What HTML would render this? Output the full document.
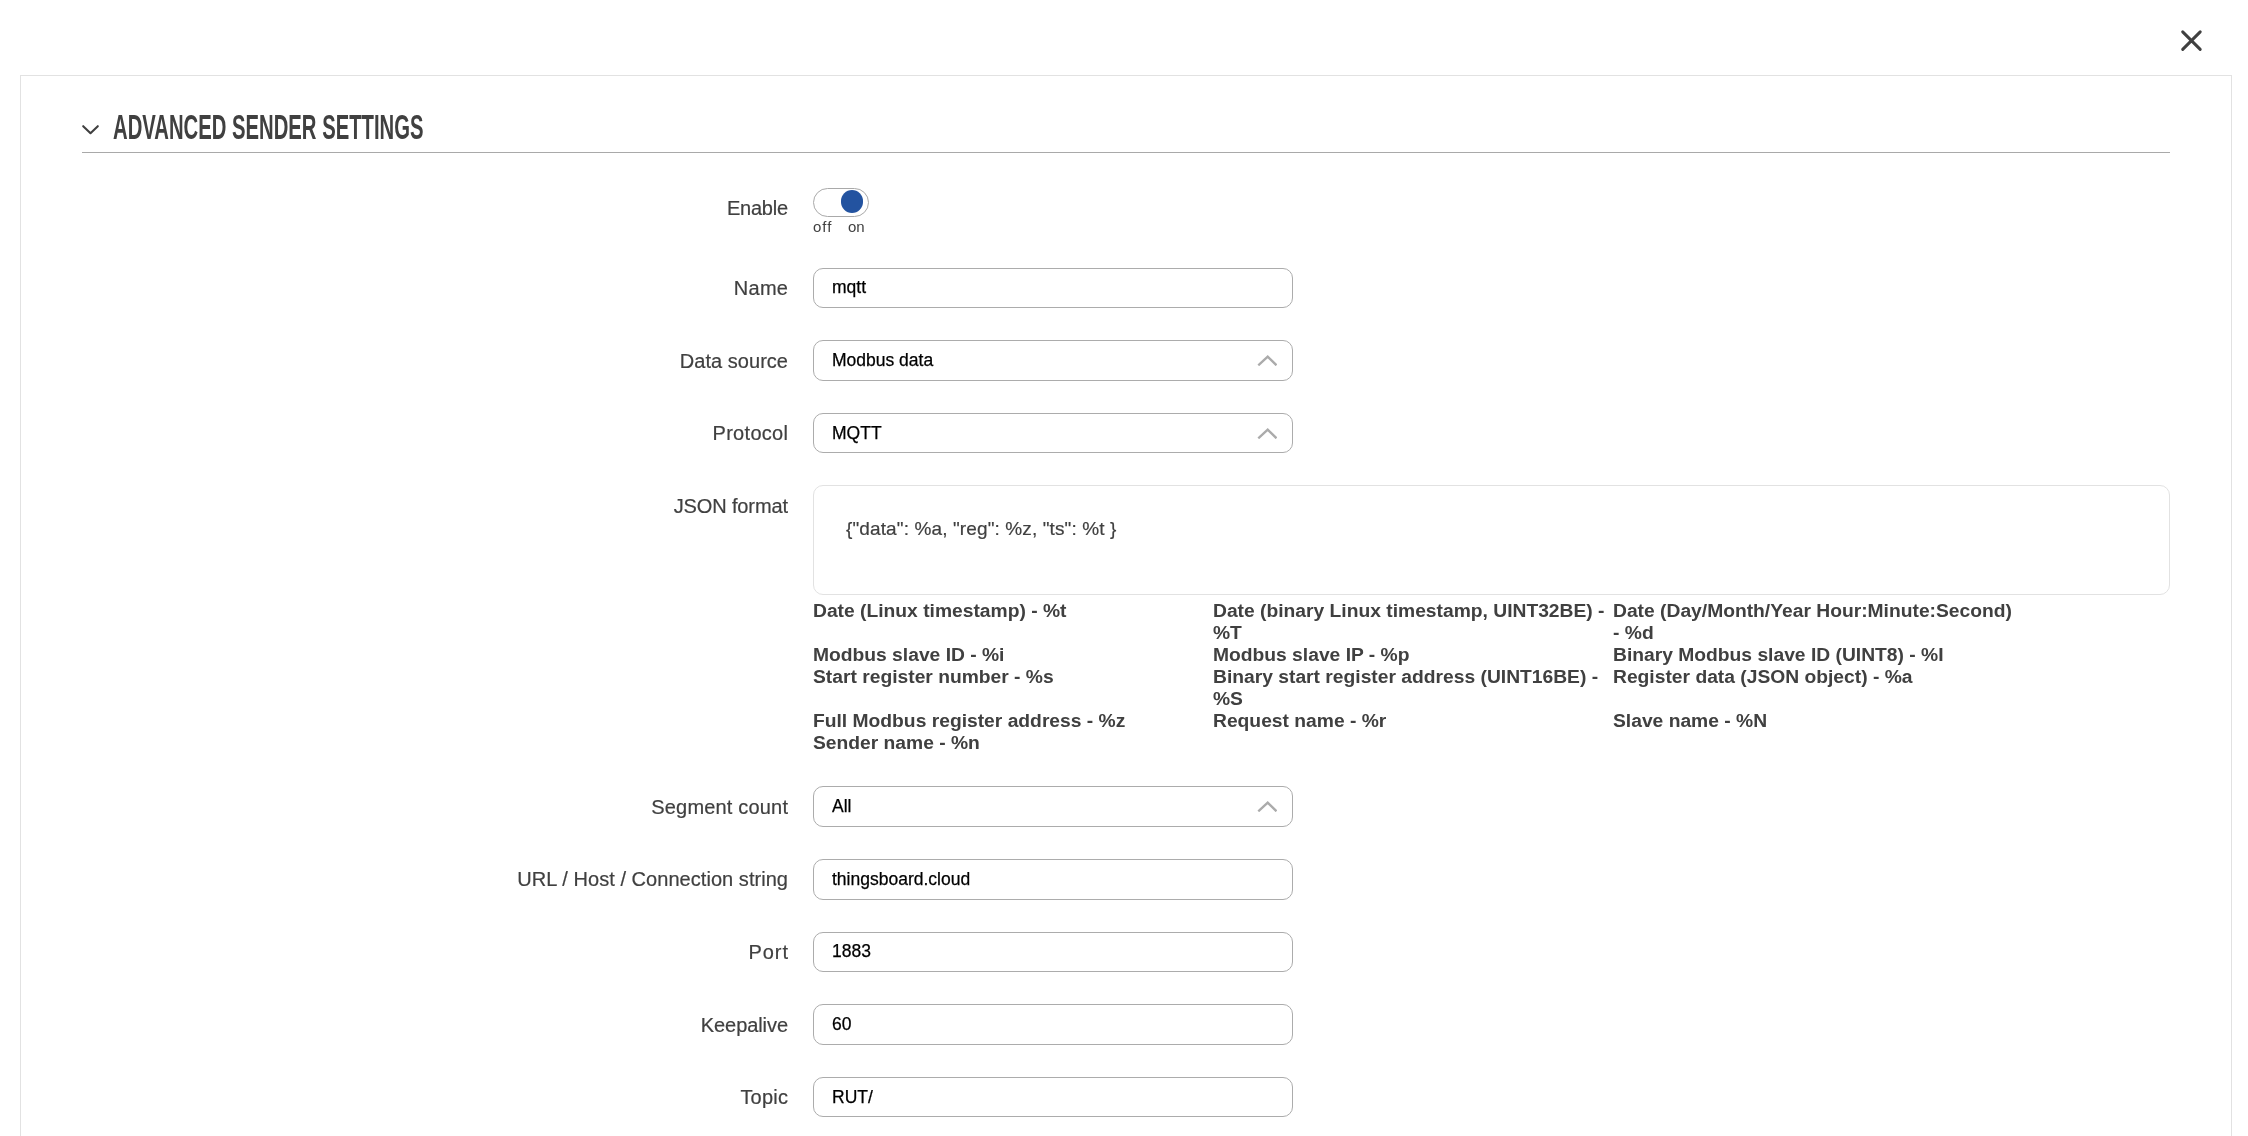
<!DOCTYPE html>
<html><head><meta charset="utf-8">
<style>
html,body{margin:0;padding:0;background:#fff;}
body{width:2248px;height:1136px;overflow:hidden;position:relative;font-family:"Liberation Sans",sans-serif;will-change:transform;}
.abs{position:absolute;}
.panel{left:20px;top:75px;width:2212px;height:1200px;border:1px solid #e2e2e2;box-sizing:border-box;}
.hline{left:82px;top:152px;width:2088px;height:1px;background:#a9a9a9;}
.title{left:113px;top:105px;font-size:34.2px;font-weight:bold;color:#404040;white-space:nowrap;transform-origin:0 0;transform:scaleX(0.593);line-height:44px;}
.lbl{right:1460px;font-size:20px;color:#404040;-webkit-text-stroke:0.2px #404040;white-space:nowrap;line-height:24px;text-align:right;}
.inp{left:813px;width:480px;height:40px;border:1px solid #acacac;border-radius:10px;box-sizing:border-box;}
.val{position:absolute;left:18px;top:0;line-height:20px;font-size:17.5px;color:#000;-webkit-text-stroke:0.25px #000;white-space:nowrap;}
.chev{position:absolute;right:15px;top:14px;width:20px;height:12px;}
.help{left:813px;top:600px;font-size:19.25px;font-weight:bold;color:#404040;line-height:22px;}
.help div{position:absolute;white-space:nowrap;}
</style></head><body>
<svg class="abs" style="left:2176px;top:25px;width:32px;height:32px" viewBox="0 0 32 32"><path d="M6.7 6.9 L24.2 24.4 M24.2 6.9 L6.7 24.4" stroke="#404040" stroke-width="3" stroke-linecap="round" fill="none"/></svg>
<div class="abs panel"></div>
<svg class="abs" style="left:80px;top:122px;width:22px;height:16px" viewBox="0 0 22 16"><path d="M3.2 4.2 L10.5 11.2 L17.8 4.2" stroke="#404040" stroke-width="2.1" fill="none" stroke-linecap="round" stroke-linejoin="round"/></svg>
<div class="abs title">ADVANCED SENDER SETTINGS</div>
<div class="abs hline"></div>
<div class="abs lbl" style="top:195.97px;letter-spacing:-0.260px;margin-right:0.260px;">Enable</div>
<div class="abs lbl" style="top:275.77px;letter-spacing:0.300px;margin-right:-0.300px;">Name</div>
<div class="abs lbl" style="top:349.37px;letter-spacing:0.030px;margin-right:-0.030px;">Data source</div>
<div class="abs lbl" style="top:420.87px;letter-spacing:0.300px;margin-right:-0.300px;">Protocol</div>
<div class="abs lbl" style="top:493.97px;letter-spacing:-0.120px;margin-right:0.120px;">JSON format</div>
<div class="abs lbl" style="top:794.87px;letter-spacing:0.183px;margin-right:-0.183px;">Segment count</div>
<div class="abs lbl" style="top:867.07px;letter-spacing:0.045px;margin-right:-0.045px;">URL / Host / Connection string</div>
<div class="abs lbl" style="top:940.37px;letter-spacing:0.900px;margin-right:-0.900px;">Port</div>
<div class="abs lbl" style="top:1012.87px;letter-spacing:-0.075px;margin-right:0.075px;">Keepalive</div>
<div class="abs lbl" style="top:1085.07px;letter-spacing:0.225px;margin-right:-0.225px;">Topic</div>
<div class="abs" style="left:813px;top:188px;width:56px;height:29px;border:1px solid #a9a9a9;border-radius:15px;box-sizing:border-box;"></div>
<div class="abs" style="left:840.8px;top:190px;width:22.5px;height:22.5px;border-radius:50%;background:#2353a0;"></div>
<div class="abs" style="left:813px;top:217px;font-size:15px;color:#404040;line-height:20px;letter-spacing:1px;">off</div>
<div class="abs" style="left:848px;top:217px;font-size:15px;color:#404040;line-height:20px;">on</div>
<div class="abs inp" style="top:268px;height:40px"><span class="val" style="top:8.24px">mqtt</span></div>
<div class="abs inp" style="top:340px;height:41px"><span class="val" style="top:9.24px">Modbus data</span><svg class="chev" style="top:13.0px" viewBox="0 0 20 12"><path d="M1.3 11.3 L10.7 2.6 L19.5 11.3" stroke="#ababab" stroke-width="2.4" fill="none"/></svg></div>
<div class="abs inp" style="top:413px;height:40px"><span class="val" style="top:9.24px">MQTT</span><svg class="chev" style="top:12.5px" viewBox="0 0 20 12"><path d="M1.3 11.3 L10.7 2.6 L19.5 11.3" stroke="#ababab" stroke-width="2.4" fill="none"/></svg></div>
<div class="abs inp" style="top:786px;height:41px"><span class="val" style="top:9.24px">All</span><svg class="chev" style="top:13.0px" viewBox="0 0 20 12"><path d="M1.3 11.3 L10.7 2.6 L19.5 11.3" stroke="#ababab" stroke-width="2.4" fill="none"/></svg></div>
<div class="abs inp" style="top:859px;height:41px"><span class="val" style="top:9.24px">thingsboard.cloud</span></div>
<div class="abs inp" style="top:932px;height:40px"><span class="val" style="top:8.24px">1883</span></div>
<div class="abs inp" style="top:1004px;height:41px"><span class="val" style="top:9.24px">60</span></div>
<div class="abs inp" style="top:1077px;height:40px"><span class="val" style="top:9.24px">RUT/</span></div>
<div class="abs" style="left:813px;top:485px;width:1357px;height:110px;border:1px solid #e2e2e2;border-radius:10px;box-sizing:border-box;"></div>
<div class="abs" style="left:846px;top:517px;font-size:19px;color:#404040;-webkit-text-stroke:0.2px #404040;line-height:24px;letter-spacing:0.12px;white-space:nowrap;">{"data": %a, "reg": %z, "ts": %t }</div>
<div class="abs help">
<div style="left:0px;top:0px">Date (Linux timestamp) - %t</div>
<div style="left:400px;top:0px">Date (binary Linux timestamp, UINT32BE) -<br>%T</div>
<div style="left:800px;top:0px">Date (Day/Month/Year Hour:Minute:Second)<br>- %d</div>
<div style="left:0px;top:44px">Modbus slave ID - %i</div>
<div style="left:400px;top:44px">Modbus slave IP - %p</div>
<div style="left:800px;top:44px">Binary Modbus slave ID (UINT8) - %I</div>
<div style="left:0px;top:66px">Start register number - %s</div>
<div style="left:400px;top:66px">Binary start register address (UINT16BE) -<br>%S</div>
<div style="left:800px;top:66px">Register data (JSON object) - %a</div>
<div style="left:0px;top:110px">Full Modbus register address - %z</div>
<div style="left:400px;top:110px">Request name - %r</div>
<div style="left:800px;top:110px">Slave name - %N</div>
<div style="left:0px;top:132px">Sender name - %n</div>
</div>
</body></html>
